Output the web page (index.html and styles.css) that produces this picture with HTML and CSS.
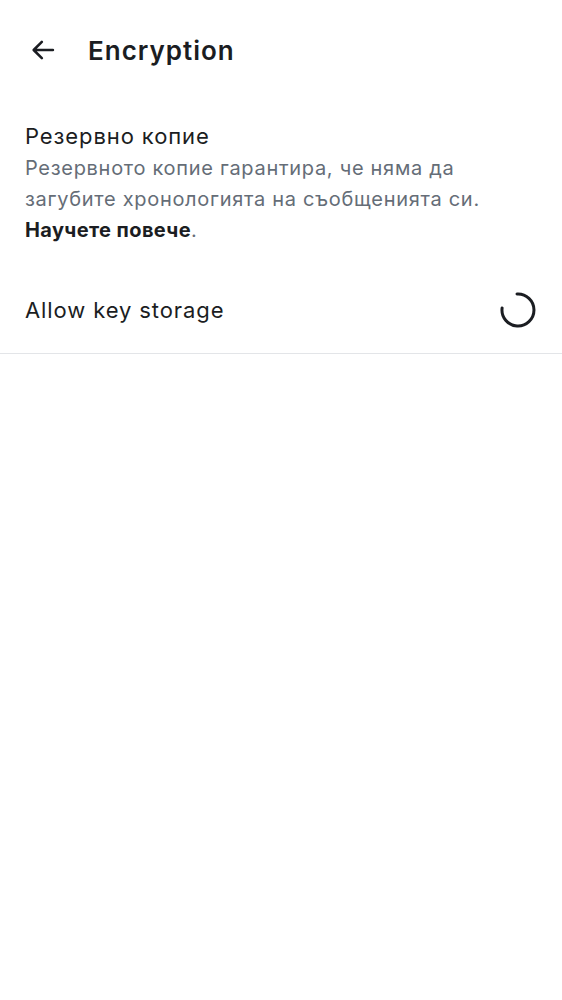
FILE: index.html
```html
<!DOCTYPE html>
<html>
<head>
<meta charset="utf-8">
<link rel="stylesheet" href="styles.css">
</head>
<body>
<header class="topbar">
  <button class="back" aria-label="Back">
    <svg width="28" height="28" viewBox="0 0 24 24"><path d="M20.5 12H4.5M11 5l-7 7 7 7" fill="none" stroke="#1b1d22" stroke-width="2.2" stroke-linecap="round" stroke-linejoin="round"/></svg>
  </button>
  <h1 class="title">Encryption</h1>
</header>
<section class="backup">
  <div class="backup-title">Резервно копие</div>
  <p class="backup-desc">Резервното копие гарантира, че няма да загубите хронологията на съобщенията си. <b class="link">Научете повече</b>.</p>
</section>
<div class="row">
  <span class="row-label">Allow key storage</span>
  <svg class="spinner" width="38" height="38" viewBox="0 0 38 38">
    <path d="M18 3 A16 16 0 1 1 3.1 17" fill="none" stroke="#1b1d22" stroke-width="3" stroke-linecap="round"/>
  </svg>
</div>
</body>
</html>
```

FILE: styles.css
```css
html, body { margin: 0; padding: 0; background: #fff; }
body { font-family: Inter, "Noto Sans", sans-serif; color: #1b1d22; width: 562px; }
.topbar { display: flex; align-items: center; height: 100px; padding-left: 28px; }
.back { border: 0; background: none; padding: 0; width: 30px; height: 30px; display: flex; align-items: center; justify-content: center; margin-right: 30px; }
.title { margin: 0; font-size: 26px; font-weight: 600; letter-spacing: 1px; }
.backup { padding: 19px 25px 0; width: 480px; }
.backup-title { font-size: 22px; line-height: 34px; letter-spacing: 0.9px; }
.backup-desc { margin: 0; font-size: 20px; line-height: 31px; letter-spacing: 0.7px; color: #656d77; }
.link { color: #1b1d22; font-weight: 700; letter-spacing: 0.4px; }
.row { display: flex; align-items: center; justify-content: space-between; height: 86px; padding: 0 25px 0 25px; border-bottom: 1px solid #e3e5e8; margin-top: 21px; }
.row-label { font-size: 22px; letter-spacing: 0.9px; }
.spinner { display: block; }
```
